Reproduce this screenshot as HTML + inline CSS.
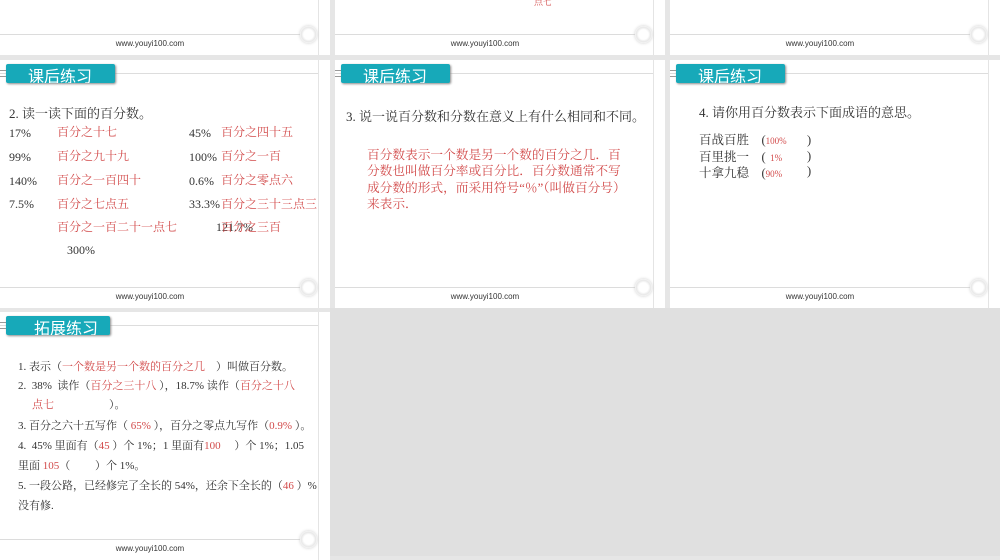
<!DOCTYPE html><html><head><meta charset="utf-8"><style>
body{margin:0;width:1000px;height:556px;background:#e6e6e6;position:relative;overflow:hidden;font-family:"Liberation Serif","Noto Serif CJK SC",serif;}
.s{position:absolute;width:330px;height:248px;background:#fff;overflow:hidden}
.vl{position:absolute;left:318px;top:0;width:1px;height:100%;background:#e4e4e4}
.fl{position:absolute;left:0;width:300px;top:227px;height:1px;background:#dcdcdc}
.url{position:absolute;left:0;width:300px;top:232px;text-align:center;font:8px "Liberation Sans",sans-serif;color:#333}
.gear{position:absolute;left:300px;top:219px;width:17px;height:17px;border-radius:50%;background:radial-gradient(circle,#fff 40%,#e8e8e8 60%,#fff 80%);box-shadow:0 0 3px #ccc}
.hl{position:absolute;left:0;top:13px;width:318px;height:1px;background:#ddd}
.tab{position:absolute;left:6px;top:4px;width:109px;height:19px;background:#17a9b9;border-radius:2px;box-shadow:1px 1px 2px #888;color:#fff;font:16px "Noto Sans CJK SC",sans-serif;line-height:22px;padding-left:22px;box-sizing:border-box;overflow:hidden}
.tl{position:absolute;left:0;top:10px;width:8px;height:5px;border-top:1px solid #999;border-bottom:1px solid #999}
.t{position:absolute;font-size:12px;color:#333;white-space:nowrap}
.r{color:#d24a4a}
</style></head><body>
<div class="s" style="left:0;top:-193px"><div class="vl"></div><div class="fl"></div><div class="url">www.youyi100.com</div><div class="gear"></div></div>
<div class="s" style="left:335px;top:-193px"><div class="vl"></div><div class="fl"></div><div class="url">www.youyi100.com</div><div class="gear"></div><div class="t r" style="left:199px;top:188px;font-size:9px">点七</div></div>
<div class="s" style="left:670px;top:-193px"><div class="vl"></div><div class="fl"></div><div class="url">www.youyi100.com</div><div class="gear"></div></div>

<div class="s" style="left:0;top:60px"><div class="vl"></div><div class="hl"></div><div class="tl"></div><div class="tab">课后练习</div><div class="fl"></div><div class="url">www.youyi100.com</div><div class="gear"></div>
<div class="t" style="left:9px;top:43px;font-size:13px">2. 读一读下面的百分数。</div>
<div class="t" style="left:9px;top:66px">17%</div><div class="t r" style="left:57px;top:63px">百分之十七</div>
<div class="t" style="left:189px;top:66px">45%</div><div class="t r" style="left:221px;top:63px">百分之四十五</div>
<div class="t" style="left:9px;top:90px">99%</div><div class="t r" style="left:57px;top:87px">百分之九十九</div>
<div class="t" style="left:189px;top:90px">100%</div><div class="t r" style="left:221px;top:87px">百分之一百</div>
<div class="t" style="left:9px;top:114px">140%</div><div class="t r" style="left:57px;top:111px">百分之一百四十</div>
<div class="t" style="left:189px;top:114px">0.6%</div><div class="t r" style="left:221px;top:111px">百分之零点六</div>
<div class="t" style="left:9px;top:137px">7.5%</div><div class="t r" style="left:57px;top:135px">百分之七点五</div>
<div class="t" style="left:189px;top:137px">33.3%</div><div class="t r" style="left:221px;top:135px">百分之三十三点三</div>
<div class="t r" style="left:57px;top:158px">百分之一百二十一点七</div>
<div class="t" style="left:216px;top:160px">121.7%</div><div class="t r" style="left:221px;top:158px">百分之三百</div>
<div class="t" style="left:67px;top:183px">300%</div>
</div>

<div class="s" style="left:335px;top:60px"><div class="vl"></div><div class="hl"></div><div class="tl"></div><div class="tab">课后练习</div><div class="fl"></div><div class="url">www.youyi100.com</div><div class="gear"></div>
<div class="t" style="left:11px;top:46px;font-size:13px">3. 说一说百分数和分数在意义上有什么相同和不同。</div>
<div class="t r" style="left:32px;top:87px;font-size:12.7px;line-height:16.3px;white-space:normal;width:262px">百分数表示一个数是另一个数的百分之几．百分数也叫做百分率或百分比．百分数通常不写成分数的形式，而采用符号“％”（叫做百分号）来表示．</div>
</div>

<div class="s" style="left:670px;top:60px"><div class="vl"></div><div class="hl"></div><div class="tl"></div><div class="tab">课后练习</div><div class="fl"></div><div class="url">www.youyi100.com</div><div class="gear"></div>
<div class="t" style="left:29px;top:42px;font-size:13px">4. 请你用百分数表示下面成语的意思。</div>
<div class="t" style="left:29px;top:73px;line-height:15.5px;font-size:12.5px">百战百胜　(<span class="r" style="font-size:9px">100%</span><br>百里挑一　(<span class="r" style="font-size:9px">&nbsp; 1%</span><br>十拿九稳　(<span class="r" style="font-size:9px">90%</span></div>
<div class="t" style="left:137px;top:73px;line-height:15.5px;font-size:12.5px">)<br>)<br>)</div>
</div>

<div class="s" style="left:0;top:312px"><div class="vl"></div><div class="hl"></div><div class="tl"></div><div class="tab" style="width:104px;padding-left:28px">拓展练习</div><div class="fl"></div><div class="url">www.youyi100.com</div><div class="gear"></div>
<div class="t" style="left:18px;top:46px;font-size:11px">1. 表示（<span class="r">一个数是另一个数的百分之几</span>　）叫做百分数。</div>
<div class="t" style="left:18px;top:65px;font-size:11px">2.&nbsp; 38%&nbsp; 读作（<span class="r">百分之三十八</span> ），18.7% 读作（<span class="r">百分之十八</span></div>
<div class="t" style="left:32px;top:84px;font-size:11px"><span class="r">点七</span>　　　　　）。</div>
<div class="t" style="left:18px;top:105px;font-size:11px">3. 百分之六十五写作（ <span class="r">65%</span> ），百分之零点九写作（<span class="r">0.9%</span> ）。</div>
<div class="t" style="left:18px;top:125px;font-size:11px">4.&nbsp; 45% 里面有（<span class="r">45</span> ）个 1%；1 里面有<span class="r">100</span>　 ）个 1%；1.05</div>
<div class="t" style="left:18px;top:145px;font-size:11px">里面 <span class="r">105</span>（　　 ）个 1%。</div>
<div class="t" style="left:18px;top:165px;font-size:11px">5. 一段公路，已经修完了全长的 54%，还余下全长的（<span class="r">46</span> ）%</div>
<div class="t" style="left:18px;top:185px;font-size:11px">没有修.</div>
</div>
<div style="position:absolute;left:330px;top:308px;width:670px;height:248px;background:#e0e0e0"></div>
</body></html>
